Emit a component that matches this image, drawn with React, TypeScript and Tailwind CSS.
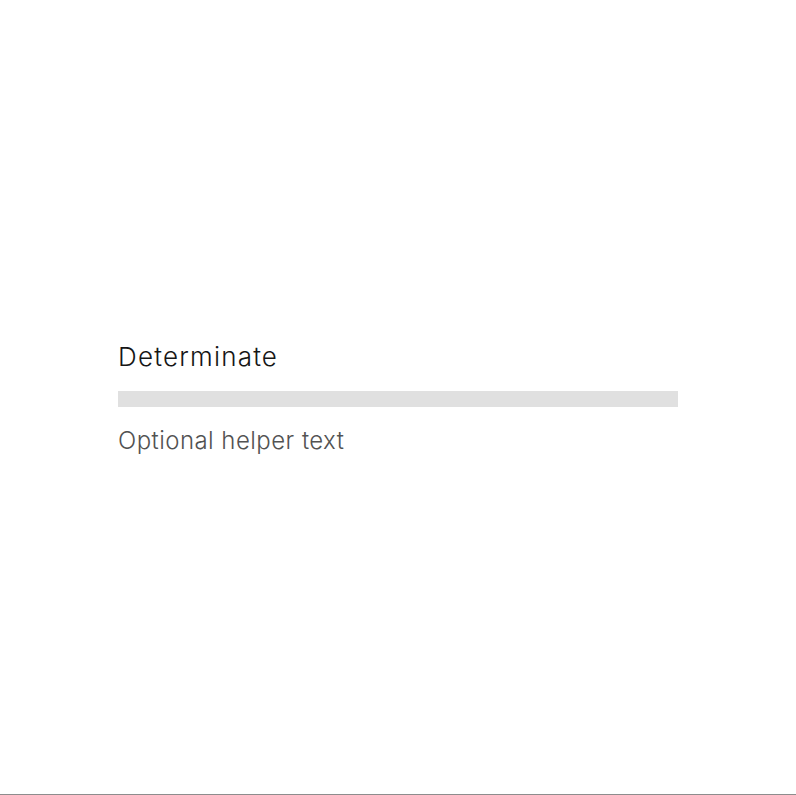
export default function App() {
  return (
    <div className="h-[795px] w-full bg-white border-b border-[#8d8d8d] flex items-center justify-center" style={{ fontFamily: 'Inter, sans-serif' }}>
      <div className="w-[560px] flex flex-col pt-[4px]">
        <div className="text-[26px] leading-[32px] text-[#161616] font-light tracking-[1.2px]">Determinate</div>
        <div className="mt-[18px] h-[16px] w-full bg-[#e0e0e0]" />
        <div className="mt-[18px] text-[24px] leading-[32px] text-[#525252] font-light tracking-[0.45px]">Optional helper text</div>
      </div>
    </div>
  );
}
